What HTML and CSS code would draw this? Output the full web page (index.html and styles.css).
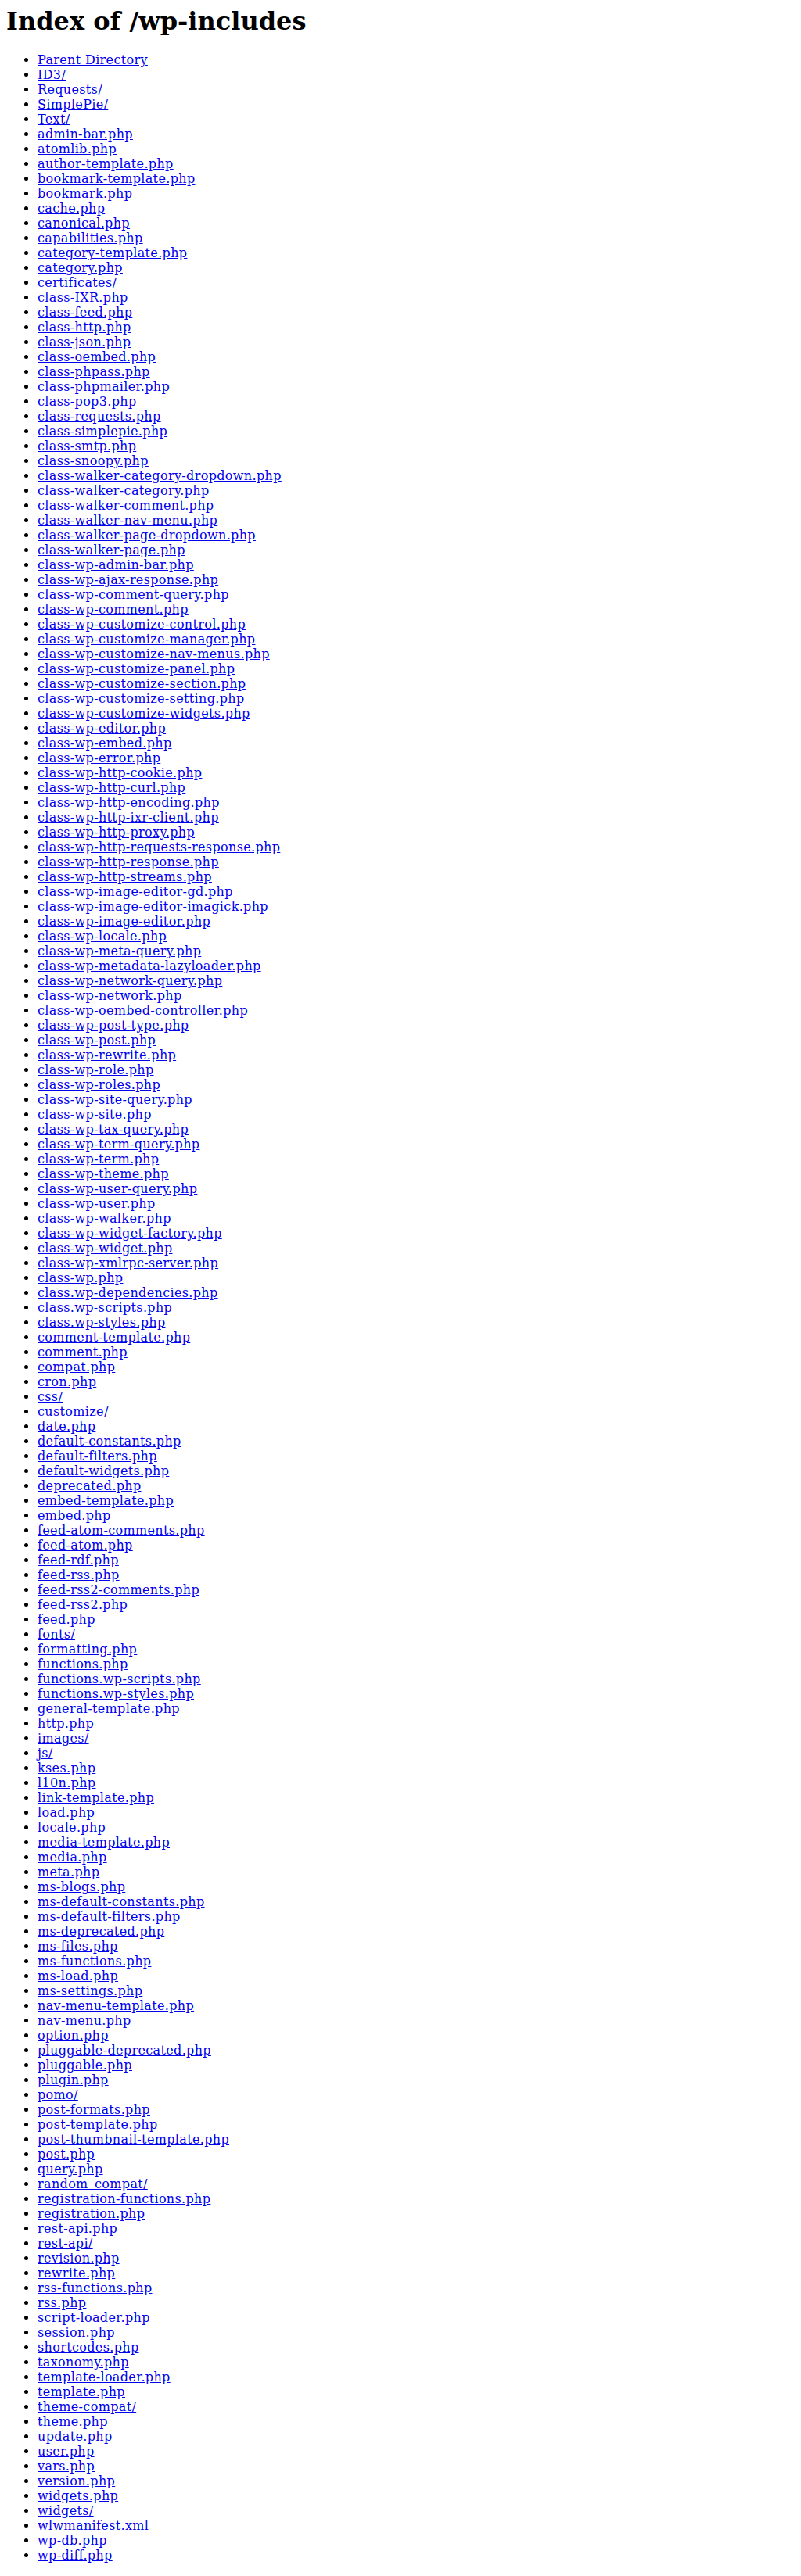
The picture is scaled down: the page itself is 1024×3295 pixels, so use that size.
FILE: index.html
```html
<!DOCTYPE html>
<html>
<head>
<meta charset="utf-8">
<title>Index of /wp-includes</title>
<link rel="stylesheet" href="styles.css">
</head>
<body class="page">
<h1 class="title">Index of /wp-includes</h1>
<ul class="listing">
<li><a href="/"> Parent Directory</a></li>
<li><a href="ID3/"> ID3/</a></li>
<li><a href="Requests/"> Requests/</a></li>
<li><a href="SimplePie/"> SimplePie/</a></li>
<li><a href="Text/"> Text/</a></li>
<li><a href="admin-bar.php"> admin-bar.php</a></li>
<li><a href="atomlib.php"> atomlib.php</a></li>
<li><a href="author-template.php"> author-template.php</a></li>
<li><a href="bookmark-template.php"> bookmark-template.php</a></li>
<li><a href="bookmark.php"> bookmark.php</a></li>
<li><a href="cache.php"> cache.php</a></li>
<li><a href="canonical.php"> canonical.php</a></li>
<li><a href="capabilities.php"> capabilities.php</a></li>
<li><a href="category-template.php"> category-template.php</a></li>
<li><a href="category.php"> category.php</a></li>
<li><a href="certificates/"> certificates/</a></li>
<li><a href="class-IXR.php"> class-IXR.php</a></li>
<li><a href="class-feed.php"> class-feed.php</a></li>
<li><a href="class-http.php"> class-http.php</a></li>
<li><a href="class-json.php"> class-json.php</a></li>
<li><a href="class-oembed.php"> class-oembed.php</a></li>
<li><a href="class-phpass.php"> class-phpass.php</a></li>
<li><a href="class-phpmailer.php"> class-phpmailer.php</a></li>
<li><a href="class-pop3.php"> class-pop3.php</a></li>
<li><a href="class-requests.php"> class-requests.php</a></li>
<li><a href="class-simplepie.php"> class-simplepie.php</a></li>
<li><a href="class-smtp.php"> class-smtp.php</a></li>
<li><a href="class-snoopy.php"> class-snoopy.php</a></li>
<li><a href="class-walker-category-dropdown.php"> class-walker-category-dropdown.php</a></li>
<li><a href="class-walker-category.php"> class-walker-category.php</a></li>
<li><a href="class-walker-comment.php"> class-walker-comment.php</a></li>
<li><a href="class-walker-nav-menu.php"> class-walker-nav-menu.php</a></li>
<li><a href="class-walker-page-dropdown.php"> class-walker-page-dropdown.php</a></li>
<li><a href="class-walker-page.php"> class-walker-page.php</a></li>
<li><a href="class-wp-admin-bar.php"> class-wp-admin-bar.php</a></li>
<li><a href="class-wp-ajax-response.php"> class-wp-ajax-response.php</a></li>
<li><a href="class-wp-comment-query.php"> class-wp-comment-query.php</a></li>
<li><a href="class-wp-comment.php"> class-wp-comment.php</a></li>
<li><a href="class-wp-customize-control.php"> class-wp-customize-control.php</a></li>
<li><a href="class-wp-customize-manager.php"> class-wp-customize-manager.php</a></li>
<li><a href="class-wp-customize-nav-menus.php"> class-wp-customize-nav-menus.php</a></li>
<li><a href="class-wp-customize-panel.php"> class-wp-customize-panel.php</a></li>
<li><a href="class-wp-customize-section.php"> class-wp-customize-section.php</a></li>
<li><a href="class-wp-customize-setting.php"> class-wp-customize-setting.php</a></li>
<li><a href="class-wp-customize-widgets.php"> class-wp-customize-widgets.php</a></li>
<li><a href="class-wp-editor.php"> class-wp-editor.php</a></li>
<li><a href="class-wp-embed.php"> class-wp-embed.php</a></li>
<li><a href="class-wp-error.php"> class-wp-error.php</a></li>
<li><a href="class-wp-http-cookie.php"> class-wp-http-cookie.php</a></li>
<li><a href="class-wp-http-curl.php"> class-wp-http-curl.php</a></li>
<li><a href="class-wp-http-encoding.php"> class-wp-http-encoding.php</a></li>
<li><a href="class-wp-http-ixr-client.php"> class-wp-http-ixr-client.php</a></li>
<li><a href="class-wp-http-proxy.php"> class-wp-http-proxy.php</a></li>
<li><a href="class-wp-http-requests-response.php"> class-wp-http-requests-response.php</a></li>
<li><a href="class-wp-http-response.php"> class-wp-http-response.php</a></li>
<li><a href="class-wp-http-streams.php"> class-wp-http-streams.php</a></li>
<li><a href="class-wp-image-editor-gd.php"> class-wp-image-editor-gd.php</a></li>
<li><a href="class-wp-image-editor-imagick.php"> class-wp-image-editor-imagick.php</a></li>
<li><a href="class-wp-image-editor.php"> class-wp-image-editor.php</a></li>
<li><a href="class-wp-locale.php"> class-wp-locale.php</a></li>
<li><a href="class-wp-meta-query.php"> class-wp-meta-query.php</a></li>
<li><a href="class-wp-metadata-lazyloader.php"> class-wp-metadata-lazyloader.php</a></li>
<li><a href="class-wp-network-query.php"> class-wp-network-query.php</a></li>
<li><a href="class-wp-network.php"> class-wp-network.php</a></li>
<li><a href="class-wp-oembed-controller.php"> class-wp-oembed-controller.php</a></li>
<li><a href="class-wp-post-type.php"> class-wp-post-type.php</a></li>
<li><a href="class-wp-post.php"> class-wp-post.php</a></li>
<li><a href="class-wp-rewrite.php"> class-wp-rewrite.php</a></li>
<li><a href="class-wp-role.php"> class-wp-role.php</a></li>
<li><a href="class-wp-roles.php"> class-wp-roles.php</a></li>
<li><a href="class-wp-site-query.php"> class-wp-site-query.php</a></li>
<li><a href="class-wp-site.php"> class-wp-site.php</a></li>
<li><a href="class-wp-tax-query.php"> class-wp-tax-query.php</a></li>
<li><a href="class-wp-term-query.php"> class-wp-term-query.php</a></li>
<li><a href="class-wp-term.php"> class-wp-term.php</a></li>
<li><a href="class-wp-theme.php"> class-wp-theme.php</a></li>
<li><a href="class-wp-user-query.php"> class-wp-user-query.php</a></li>
<li><a href="class-wp-user.php"> class-wp-user.php</a></li>
<li><a href="class-wp-walker.php"> class-wp-walker.php</a></li>
<li><a href="class-wp-widget-factory.php"> class-wp-widget-factory.php</a></li>
<li><a href="class-wp-widget.php"> class-wp-widget.php</a></li>
<li><a href="class-wp-xmlrpc-server.php"> class-wp-xmlrpc-server.php</a></li>
<li><a href="class-wp.php"> class-wp.php</a></li>
<li><a href="class.wp-dependencies.php"> class.wp-dependencies.php</a></li>
<li><a href="class.wp-scripts.php"> class.wp-scripts.php</a></li>
<li><a href="class.wp-styles.php"> class.wp-styles.php</a></li>
<li><a href="comment-template.php"> comment-template.php</a></li>
<li><a href="comment.php"> comment.php</a></li>
<li><a href="compat.php"> compat.php</a></li>
<li><a href="cron.php"> cron.php</a></li>
<li><a href="css/"> css/</a></li>
<li><a href="customize/"> customize/</a></li>
<li><a href="date.php"> date.php</a></li>
<li><a href="default-constants.php"> default-constants.php</a></li>
<li><a href="default-filters.php"> default-filters.php</a></li>
<li><a href="default-widgets.php"> default-widgets.php</a></li>
<li><a href="deprecated.php"> deprecated.php</a></li>
<li><a href="embed-template.php"> embed-template.php</a></li>
<li><a href="embed.php"> embed.php</a></li>
<li><a href="feed-atom-comments.php"> feed-atom-comments.php</a></li>
<li><a href="feed-atom.php"> feed-atom.php</a></li>
<li><a href="feed-rdf.php"> feed-rdf.php</a></li>
<li><a href="feed-rss.php"> feed-rss.php</a></li>
<li><a href="feed-rss2-comments.php"> feed-rss2-comments.php</a></li>
<li><a href="feed-rss2.php"> feed-rss2.php</a></li>
<li><a href="feed.php"> feed.php</a></li>
<li><a href="fonts/"> fonts/</a></li>
<li><a href="formatting.php"> formatting.php</a></li>
<li><a href="functions.php"> functions.php</a></li>
<li><a href="functions.wp-scripts.php"> functions.wp-scripts.php</a></li>
<li><a href="functions.wp-styles.php"> functions.wp-styles.php</a></li>
<li><a href="general-template.php"> general-template.php</a></li>
<li><a href="http.php"> http.php</a></li>
<li><a href="images/"> images/</a></li>
<li><a href="js/"> js/</a></li>
<li><a href="kses.php"> kses.php</a></li>
<li><a href="l10n.php"> l10n.php</a></li>
<li><a href="link-template.php"> link-template.php</a></li>
<li><a href="load.php"> load.php</a></li>
<li><a href="locale.php"> locale.php</a></li>
<li><a href="media-template.php"> media-template.php</a></li>
<li><a href="media.php"> media.php</a></li>
<li><a href="meta.php"> meta.php</a></li>
<li><a href="ms-blogs.php"> ms-blogs.php</a></li>
<li><a href="ms-default-constants.php"> ms-default-constants.php</a></li>
<li><a href="ms-default-filters.php"> ms-default-filters.php</a></li>
<li><a href="ms-deprecated.php"> ms-deprecated.php</a></li>
<li><a href="ms-files.php"> ms-files.php</a></li>
<li><a href="ms-functions.php"> ms-functions.php</a></li>
<li><a href="ms-load.php"> ms-load.php</a></li>
<li><a href="ms-settings.php"> ms-settings.php</a></li>
<li><a href="nav-menu-template.php"> nav-menu-template.php</a></li>
<li><a href="nav-menu.php"> nav-menu.php</a></li>
<li><a href="option.php"> option.php</a></li>
<li><a href="pluggable-deprecated.php"> pluggable-deprecated.php</a></li>
<li><a href="pluggable.php"> pluggable.php</a></li>
<li><a href="plugin.php"> plugin.php</a></li>
<li><a href="pomo/"> pomo/</a></li>
<li><a href="post-formats.php"> post-formats.php</a></li>
<li><a href="post-template.php"> post-template.php</a></li>
<li><a href="post-thumbnail-template.php"> post-thumbnail-template.php</a></li>
<li><a href="post.php"> post.php</a></li>
<li><a href="query.php"> query.php</a></li>
<li><a href="random_compat/"> random_compat/</a></li>
<li><a href="registration-functions.php"> registration-functions.php</a></li>
<li><a href="registration.php"> registration.php</a></li>
<li><a href="rest-api.php"> rest-api.php</a></li>
<li><a href="rest-api/"> rest-api/</a></li>
<li><a href="revision.php"> revision.php</a></li>
<li><a href="rewrite.php"> rewrite.php</a></li>
<li><a href="rss-functions.php"> rss-functions.php</a></li>
<li><a href="rss.php"> rss.php</a></li>
<li><a href="script-loader.php"> script-loader.php</a></li>
<li><a href="session.php"> session.php</a></li>
<li><a href="shortcodes.php"> shortcodes.php</a></li>
<li><a href="taxonomy.php"> taxonomy.php</a></li>
<li><a href="template-loader.php"> template-loader.php</a></li>
<li><a href="template.php"> template.php</a></li>
<li><a href="theme-compat/"> theme-compat/</a></li>
<li><a href="theme.php"> theme.php</a></li>
<li><a href="update.php"> update.php</a></li>
<li><a href="user.php"> user.php</a></li>
<li><a href="vars.php"> vars.php</a></li>
<li><a href="version.php"> version.php</a></li>
<li><a href="widgets.php"> widgets.php</a></li>
<li><a href="widgets/"> widgets/</a></li>
<li><a href="wlwmanifest.xml"> wlwmanifest.xml</a></li>
<li><a href="wp-db.php"> wp-db.php</a></li>
<li><a href="wp-diff.php"> wp-diff.php</a></li>
</ul>
</body>
</html>
```

FILE: styles.css
```css
.page {
  margin: 8px;
  font-family: "DejaVu Serif", serif;
  font-size: 16px;
  color: #000;
  background: #fff;
}

.title {
  font-size: 2em;
  font-weight: bold;
  margin: 0 0 0.67em;
}

.listing {
  margin: 1em 0;
  padding-left: 40px;
  list-style: disc;
}

.listing a {
  color: #0000ee;
  text-decoration: underline;
  letter-spacing: 0.35px;
}
```
